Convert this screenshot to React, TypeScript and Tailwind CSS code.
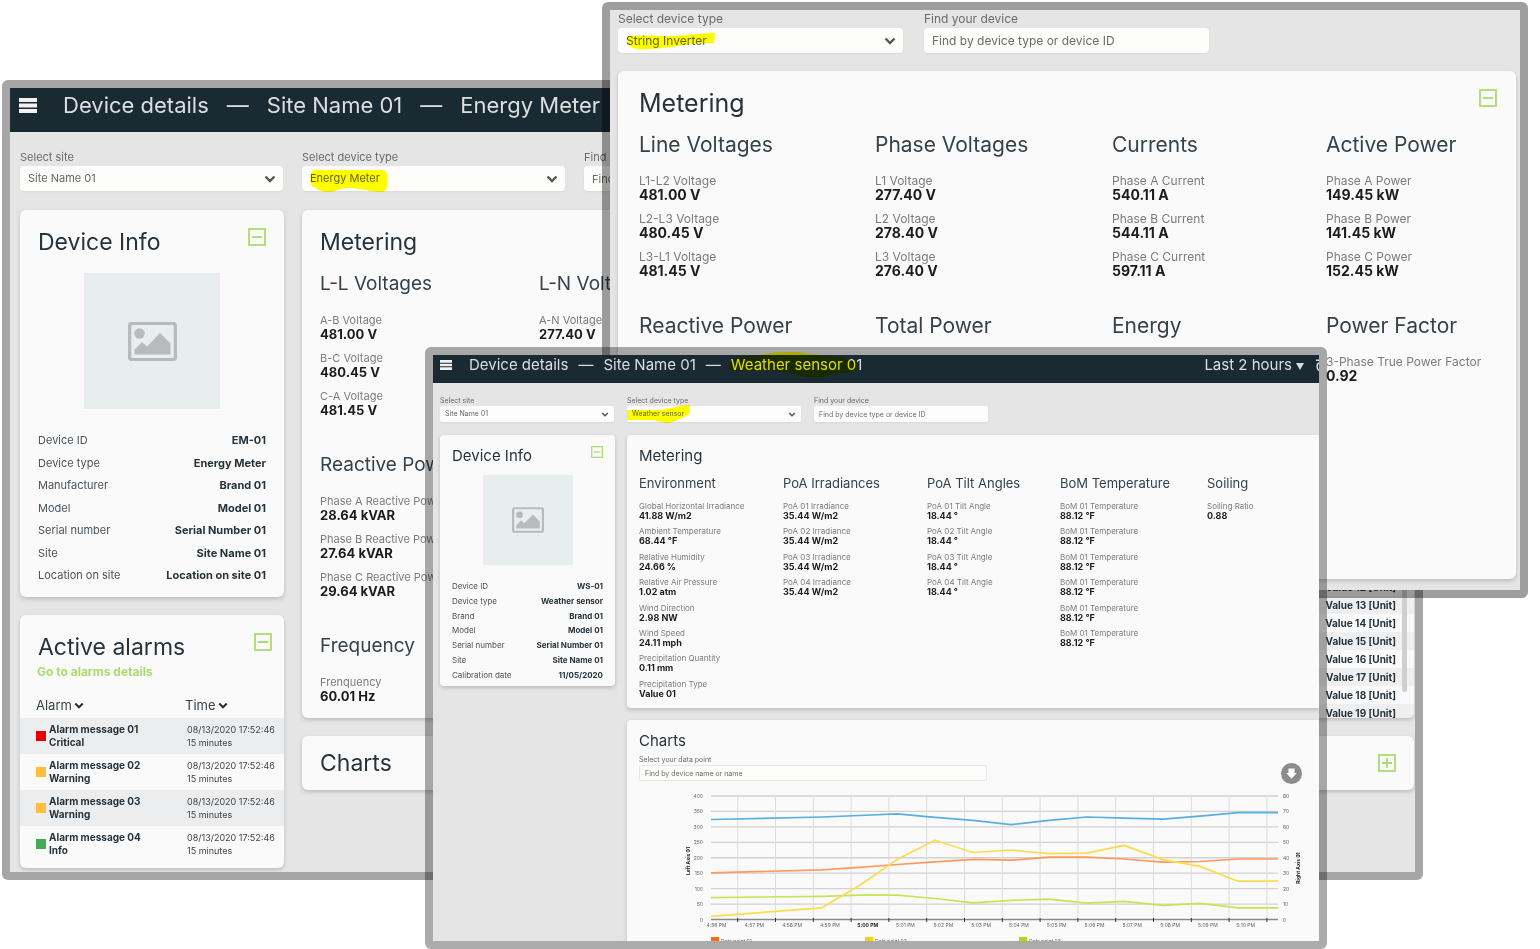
import { type ReactNode, useId } from 'react';
import clsx from 'clsx';

type Size = 'sm' | 'md' | 'lg';
type Reading = [label: string, value: string];
type Group = { title: string; readings: Reading[] };

const TITLE: Record<Size, string> = {
  sm: 'text-[15px] leading-5',
  md: 'text-[23px] leading-7',
  lg: 'text-[25px] leading-7',
};

const GROUP_TITLE: Record<Size, string> = {
  sm: 'text-[13px] leading-4',
  md: 'text-[19px] leading-6',
  lg: 'text-[21px] leading-6',
};

const FIELD_LABEL: Record<Size, string> = {
  sm: 'text-[7px] leading-[9px]',
  md: 'text-[11px] leading-[14px]',
  lg: 'text-[12px] leading-[14px]',
};

const LABEL: Record<Size, string> = {
  sm: 'text-[8px] leading-[9px]',
  md: 'text-[11px] leading-[14px]',
  lg: 'text-[12px] leading-[14px]',
};

const VALUE: Record<Size, string> = {
  sm: 'text-[9px] leading-[10px]',
  md: 'text-[13px] leading-[14px]',
  lg: 'text-[14px] leading-[14px]',
};

const FIELD: Record<Size, string> = {
  sm: 'h-4 px-[5px] text-[7px] rounded-xs',
  md: 'h-[25px] px-2 text-[11px] rounded-sm',
  lg: 'h-[25px] px-2 text-[12px] rounded-sm',
};

function ToggleButton({ open = true, small = false, label }: { open?: boolean; small?: boolean; label: string }) {
  return (
    <button type="button" aria-label={label} className="block shrink-0 text-[#aadb6e]">
      <svg viewBox="0 0 18 18" className={small ? 'size-3' : 'size-[18px]'} fill="none" stroke="currentColor" strokeWidth="1.8">
        <rect x="1" y="1" width="16" height="16" />
        <path d={open ? 'M4 9h10' : 'M4 9h10M9 4v10'} />
      </svg>
    </button>
  );
}

function MenuButton({ small = false }: { small?: boolean }) {
  return (
    <button type="button" aria-label="Menu" className="block shrink-0 text-[#f2f2f2]">
      <svg viewBox="0 0 18 15" className={small ? 'h-[10px] w-3' : 'h-[15px] w-[18px]'} fill="currentColor">
        <path d="M0 0h18v4H0zM0 5.5h18v4H0zM0 11h18v4H0z" />
      </svg>
    </button>
  );
}

function PictureIcon({ className }: { className: string }) {
  return (
    <svg viewBox="0 0 49 39" className={className} fill="#b9babe" aria-hidden="true">
      <path
        fillRule="evenodd"
        d="M3.5 0h42A3.5 3.5 0 0 1 49 3.500v32a3.500 3.500 0 0 1-3.500 3.500h-42A3.500 3.500 0 0 1 0 35.500v-32A3.500 3.500 0 0 1 3.500 0zM4.500 3a1.200 1.200 0 0 0-1.200 1.200v30.600a1.200 1.200 0 0 0 1.200 1.200h40a1.200 1.200 0 0 0 1.200-1.200V4.200A1.200 1.200 0 0 0 44.500 3z"
      />
      <circle cx="11.500" cy="11.500" r="5.200" />
      <path d="M6.500 32.500v-5l7.500-7.500 5 4.500L32 11l10.500 10.500v11z" />
    </svg>
  );
}

function Marker({ d, viewBox, className }: { d: string; viewBox: string; className: string }) {
  return (
    <svg viewBox={viewBox} className={clsx('pointer-events-none absolute mix-blend-multiply', className)} fill="#ffff00" aria-hidden="true">
      <path d={d} />
    </svg>
  );
}

type FieldProps = { label: string; size: Size; className?: string };

function SelectField({ label, size, className, value, marker }: FieldProps & { value: string; marker?: ReactNode }) {
  const id = useId();
  return (
    <div className={className}>
      <label htmlFor={id} className={clsx('block text-[#6b6b6b]', FIELD_LABEL[size])}>{label}</label>
      <div className={clsx('relative', size === 'sm' ? 'mt-px' : 'mt-0.5')}>
        <select id={id} className={clsx('block w-full appearance-none bg-[#fdfdfb] text-[#666] shadow-xs', FIELD[size])}>
          <option>{value}</option>
        </select>
        <svg
          viewBox="0 0 12 8"
          className={clsx('pointer-events-none absolute', size === 'sm' ? 'top-[6px] right-[5px] h-[5px] w-2' : 'top-[9px] right-[7px] h-2 w-3')}
          fill="none"
          stroke="#555"
          strokeWidth="2.4"
          aria-hidden="true"
        >
          <path d="M1.500 1.500 6 6l4.500-4.500" />
        </svg>
        {marker}
      </div>
    </div>
  );
}

function TextField({ label, size, className, placeholder, bordered }: FieldProps & { placeholder: string; bordered?: boolean }) {
  const id = useId();
  return (
    <div className={className}>
      <label htmlFor={id} className={clsx('block text-[#6b6b6b]', FIELD_LABEL[size])}>{label}</label>
      <input
        id={id}
        placeholder={placeholder}
        className={clsx(
          'block w-full bg-[#fdfdfb] text-[#555] placeholder:text-[#6b6b6b]',
          FIELD[size],
          size === 'sm' ? 'mt-px' : 'mt-0.5',
          bordered ? 'border border-[#e6e6e6]' : 'shadow-xs',
        )}
      />
    </div>
  );
}

function Card({ className, children }: { className?: string; children: ReactNode }) {
  return <section className={clsx('bg-[#fafafa] shadow-[0_2px_4px_rgba(0,0,0,0.18)]', className)}>{children}</section>;
}

function ReadingItem({ reading: [label, value], size }: { reading: Reading; size: Size }) {
  return (
    <div className="whitespace-nowrap">
      <dt className={clsx('text-[#7c7c7c]', LABEL[size])}>{label}</dt>
      <dd className={clsx('font-bold text-[#1c1c1c]', VALUE[size])}>{value}</dd>
    </div>
  );
}

function ReadingGroup({ group, size }: { group: Group; size: Size }) {
  return (
    <div>
      <h3 className={clsx('whitespace-nowrap text-[#36424a]', GROUP_TITLE[size])}>{group.title}</h3>
      <dl className={size === 'sm' ? 'mt-[11px] grid h-[203px] grid-rows-8' : 'mt-[17px] grid gap-2.5'}>
        {group.readings.map((reading, i) => (
          <ReadingItem key={i} reading={reading} size={size} />
        ))}
      </dl>
    </div>
  );
}

function DeviceInfo({ rows, small = false }: { rows: Reading[]; small?: boolean }) {
  return (
    <Card className={small ? 'rounded-sm px-3 pt-[11px] pb-[6px]' : 'rounded-md px-[18px] pt-[18px] pb-[14px]'}>
      <div className="flex items-start justify-between">
        <h2 className={clsx('text-[#26333c]', TITLE[small ? 'sm' : 'md'])}>Device Info</h2>
        <ToggleButton small={small} label="Collapse device info" />
      </div>
      <div
        className={clsx(
          'mx-auto flex items-center justify-center bg-[#e8eeee]',
          small ? 'mt-[9px] size-[90px]' : 'mt-[17px] size-[136px]',
        )}
      >
        <PictureIcon className={small ? 'h-[26px] w-8' : 'h-[39px] w-[49px]'} />
      </div>
      <dl className={clsx('flex flex-col justify-between', small ? 'mt-4 h-[99px] text-[8px] leading-[10px]' : 'mt-[23px] h-[151px] text-[11px] leading-4')}>
        {rows.map(([label, value]) => (
          <div key={label} className="flex justify-between whitespace-nowrap text-[#27333b]">
            <dt className="text-[#4a545b]">{label}</dt>
            <dd className="font-bold">{value}</dd>
          </div>
        ))}
      </dl>
    </Card>
  );
}

const volts = (names: string[], values: string[]): Reading[] => names.map((n, i) => [n, values[i]]);

const METER_INFO: Reading[] = [
  ['Device ID', 'EM-01'],
  ['Device type', 'Energy Meter'],
  ['Manufacturer', 'Brand 01'],
  ['Model', 'Model 01'],
  ['Serial number', 'Serial Number 01'],
  ['Site', 'Site Name 01'],
  ['Location on site', 'Location on site 01'],
];

const METER_GROUPS: Group[] = [
  { title: 'L-L Voltages', readings: volts(['A-B Voltage', 'B-C Voltage', 'C-A Voltage'], ['481.00 V', '480.45 V', '481.45 V']) },
  { title: 'L-N Voltages', readings: volts(['A-N Voltage'], ['277.40 V']) },
  {
    title: 'Reactive Power',
    readings: [
      ['Phase A Reactive Power', '28.64 kVAR'],
      ['Phase B Reactive Power', '27.64 kVAR'],
      ['Phase C Reactive Power', '29.64 kVAR'],
    ],
  },
  { title: '', readings: [] },
  { title: 'Frequency', readings: [['Frenquency', '60.01 Hz']] },
];

const ALARMS = [
  { message: 'Alarm message 01', level: 'Critical', color: 'bg-[#e60000]' },
  { message: 'Alarm message 02', level: 'Warning', color: 'bg-[#ffbe3d]' },
  { message: 'Alarm message 03', level: 'Warning', color: 'bg-[#ffbe3d]' },
  { message: 'Alarm message 04', level: 'Info', color: 'bg-[#43ac54]' },
];

const LIST_VALUES = [12, 13, 14, 15, 16, 17, 18, 19];

const INVERTER_GROUPS: Group[] = [
  { title: 'Line Voltages', readings: volts(['L1-L2 Voltage', 'L2-L3 Voltage', 'L3-L1 Voltage'], ['481.00 V', '480.45 V', '481.45 V']) },
  { title: 'Phase Voltages', readings: volts(['L1 Voltage', 'L2 Voltage', 'L3 Voltage'], ['277.40 V', '278.40 V', '276.40 V']) },
  { title: 'Currents', readings: volts(['Phase A Current', 'Phase B Current', 'Phase C Current'], ['540.11 A', '544.11 A', '597.11 A']) },
  { title: 'Active Power', readings: volts(['Phase A Power', 'Phase B Power', 'Phase C Power'], ['149.45 kW', '141.45 kW', '152.45 kW']) },
  { title: 'Reactive Power', readings: [] },
  { title: 'Total Power', readings: [] },
  { title: 'Energy', readings: [] },
  { title: 'Power Factor', readings: [['3-Phase True Power Factor', '0.92']] },
];

const SENSOR_INFO: Reading[] = [
  ['Device ID', 'WS-01'],
  ['Device type', 'Weather sensor'],
  ['Brand', 'Brand 01'],
  ['Model', 'Model 01'],
  ['Serial number', 'Serial Number 01'],
  ['Site', 'Site Name 01'],
  ['Calibration date', '11/05/2020'],
];

const SENSOR_GROUPS: Group[] = [
  {
    title: 'Environment',
    readings: [
      ['Global Horizontal Irradiance', '41.88 W/m2'],
      ['Ambient Temperature', '68.44 °F'],
      ['Relative Humidity', '24.66 %'],
      ['Relative Air Pressure', '1.02 atm'],
      ['Wind Direction', '2.98 NW'],
      ['Wind Speed', '24.11 mph'],
      ['Precipitation Quantity', '0.11 mm'],
      ['Precipitation Type', 'Value 01'],
    ],
  },
  { title: 'PoA Irradiances', readings: ['01', '02', '03', '04'].map((n): Reading => [`PoA ${n} Irradiance`, '35.44 W/m2']) },
  { title: 'PoA Tilt Angles', readings: ['01', '02', '03', '04'].map((n): Reading => [`PoA ${n} Tilt Angle`, '18.44 °']) },
  { title: 'BoM Temperature', readings: Array.from({ length: 6 }, (): Reading => ['BoM 01 Temperature', '88.12 °F']) },
  { title: 'Soiling', readings: [['Soiling Ratio', '0.88']] },
];

const CHART_X = [72, 183, 220, 258, 296, 334, 372, 410, 448, 485, 524, 561, 599, 639];
const CHART_SERIES = [
  { color: '#57b0e0', values: [324, 332, 337, 342, 331, 321, 307, 321, 332, 328, 325, 335, 346, 346] },
  { color: '#ff9a5c', values: [151, 161, 169, 178, 187, 195, 192, 202, 202, 196, 186, 188, 196, 196] },
  { color: '#c3e656', values: [71, 75, 79, 79, 68, 54, 62, 66, 53, 59, 46, 52, 38, 38] },
  { color: '#fbdc4c', values: [10, 38, 109, 194, 257, 217, 225, 213, 215, 240, 194, 172, 124, 124] },
];
const CHART_TIMES = [
  '4:56 PM', '4:57 PM', '4:58 PM', '4:59 PM', '5:00 PM', '5:01 PM', '5:02 PM', '5:03 PM',
  '5:04 PM', '5:05 PM', '5:06 PM', '5:07 PM', '5:08 PM', '5:09 PM', '5:10 PM',
];
const CHART_LEGEND = [
  { x: 72, color: '#ff6a13', name: 'Data point 01' },
  { x: 226, color: '#fccf00', name: 'Data point 02' },
  { x: 380, color: '#a9dc00', name: 'Data point 03' },
];

const chartY = (value: number) => 130.5 - (value / 400) * 123.5;

function Chart() {
  return (
    <svg viewBox="0 0 680 164" className="mt-2 block w-full" fontSize="5" role="img" aria-label="Data points over time">
      {Array.from({ length: 9 }, (_, i) => (
        <g key={i}>
          <path d={`M72 ${chartY(i * 50)}H639`} stroke={i === 0 ? '#8a8a8a' : '#d2d2d2'} strokeWidth="1.3" />
          <text x="64" y={chartY(i * 50) + 2} textAnchor="end" fill="#666">{i * 50}</text>
          <text x="644" y={chartY(i * 50) + 2} fill="#666">{i * 10}</text>
        </g>
      ))}
      {Array.from({ length: 15 }, (_, i) => (
        <g key={i}>
          <path d={`M${98.7 + i * 37.8} 7v123`} stroke="#dcdcdc" />
          <path d={`M${98.7 + i * 37.8} 129v4`} stroke="#333" />
        </g>
      ))}
      {CHART_TIMES.map((time, i) => (
        <text
          key={time}
          x={77.5 + i * 37.8}
          y="138"
          textAnchor="middle"
          fill={time === '5:00 PM' ? '#222' : '#666'}
          fontWeight={time === '5:00 PM' ? 700 : 400}
        >
          {time}
        </text>
      ))}
      <text transform="translate(51 72) rotate(-90)" textAnchor="middle" fontWeight="700" fill="#222">Left Axis 01</text>
      <text transform="translate(661 79) rotate(-90)" textAnchor="middle" fontWeight="700" fill="#222">Right Axis 01</text>
      {CHART_SERIES.map(({ color, values }) => (
        <polyline
          key={color}
          points={values.map((v, i) => `${CHART_X[i]},${chartY(v).toFixed(1)}`).join(' ')}
          fill="none"
          stroke={color}
          strokeWidth="1.7"
          strokeLinejoin="round"
        />
      ))}
      {CHART_LEGEND.map(({ x, color, name }) => (
        <g key={name}>
          <rect x={x} y="148" width="8" height="8" fill={color} />
          <text x={x + 10} y="154" fill="#666">{name}</text>
        </g>
      ))}
    </svg>
  );
}

function EnergyMeterWindow() {
  return (
    <article className="absolute top-20 right-[117px] left-0.5 isolate flex h-[800px] flex-col rounded-md border-8 border-black/35 bg-[#e5e5e5] bg-clip-padding">
      <header className="flex h-11 shrink-0 items-center bg-[#1a2a33] pb-2.5 pl-[9px] text-[22px] whitespace-nowrap text-[#dcdfe0]">
        <MenuButton />
        <h1 className="ml-[26px] flex gap-[18px]">
          <span>Device details</span>
          <span>—</span>
          <span>Site Name 01</span>
          <span>—</span>
          <span>Energy Meter</span>
        </h1>
      </header>
      <div className="flex min-h-0 flex-1 flex-col gap-[19px] overflow-hidden pt-[18px] pl-2.5">
        <div className="flex gap-[19px]">
          <SelectField size="md" label="Select site" value="Site Name 01" className="w-[263px]" />
          <SelectField
            size="md"
            label="Select device type"
            value="Energy Meter"
            className="w-[263px]"
            marker={
              <Marker
                viewBox="0 0 77 23"
                className="top-1 left-2 h-[23px] w-[77px]"
                d="M3 0 73 0Q77 1 77 4V16Q76 22 72 22C60 22 52 18 38 18 28 18 26 22 18 22 10 22 6 18 1 15Q-1 4 3 0Z"
              />
            }
          />
          <TextField size="md" label="Find your device" placeholder="Find by device type or device ID" className="w-[263px]" />
        </div>
        <div className="flex gap-[18px] pr-px">
          <div className="flex w-[264px] shrink-0 flex-col gap-[18px]">
            <DeviceInfo rows={METER_INFO} />
            <Card className="overflow-hidden rounded-md pt-[18px] pb-1.5">
              <div className="flex items-start justify-between pr-3 pl-[18px]">
                <h2 className={clsx('text-[#26333c]', TITLE.md)}>Active alarms</h2>
                <ToggleButton label="Collapse active alarms" />
              </div>
              <a href="#alarms" className="mt-[3px] ml-[17px] block text-[12px] leading-4 font-bold text-[#aadb6e]">Go to alarms details</a>
              <table className="mt-[13px] w-full table-fixed text-left text-[10px] leading-[13px] text-[#444]">
                <thead>
                  <tr className="h-[25px] text-[13px] text-[#36424a]">
                    {['Alarm', 'Time'].map((name) => (
                      <th key={name} className="pl-4 font-normal first:w-[149px] last:pl-4">
                        <button type="button" className="flex items-center gap-0.5">
                          {name}
                          <svg viewBox="0 0 12 8" className="h-[7px] w-2.5" fill="none" stroke="#333" strokeWidth="2.600" aria-hidden="true">
                            <path d="M1.500 1.500 6 6l4.500-4.500" />
                          </svg>
                        </button>
                      </th>
                    ))}
                  </tr>
                </thead>
                <tbody>
                  {ALARMS.map((alarm) => (
                    <tr key={alarm.message} className="h-9 odd:bg-[#ecedef]">
                      <td className="pl-4 font-bold text-[#26333c]">
                        <div className="flex items-center gap-[3px]">
                          <span className={clsx('size-2.5 shrink-0', alarm.color)} />
                          <span className="whitespace-nowrap">
                            {alarm.message}
                            <br />
                            {alarm.level}
                          </span>
                        </div>
                      </td>
                      <td className="pl-[18px] text-[9px] whitespace-nowrap">
                        08/13/2020 17:52:46
                        <br />
                        15 minutes
                      </td>
                    </tr>
                  ))}
                </tbody>
              </table>
            </Card>
          </div>
          <div className="flex min-w-0 flex-1 flex-col gap-[18px]">
            <div className="flex h-[508px] gap-[18px]">
              <Card className="min-w-0 flex-1 rounded-md px-[18px] pt-[18px]">
                <h2 className={clsx('text-[#26333c]', TITLE.md)}>Metering</h2>
                <div className="mt-4 grid grid-cols-[219px_219px] gap-y-9">
                  {METER_GROUPS.map((group, i) => (
                    <ReadingGroup key={i} group={group} size="md" />
                  ))}
                </div>
              </Card>
              <Card className="relative flex w-[264px] shrink-0 flex-col justify-end overflow-hidden rounded-md">
                <ul className="-mb-1 text-right text-[10px] leading-[18px] font-bold text-[#26333c]">
                  {LIST_VALUES.map((n) => (
                    <li key={n} className="pr-[18px] even:bg-[#efefef]">Value {n} [Unit]</li>
                  ))}
                </ul>
                <span className="absolute right-[7px] bottom-[26px] h-40 w-[5px] rounded-full bg-[#cfcfcf]" />
              </Card>
            </div>
            <Card className="flex h-[54px] items-center justify-between rounded-md px-[18px]">
              <h2 className={clsx('text-[#26333c]', TITLE.md)}>Charts</h2>
              <ToggleButton open={false} label="Expand charts" />
            </Card>
          </div>
        </div>
      </div>
    </article>
  );
}

function StringInverterWindow() {
  return (
    <article className="absolute top-0.5 right-3 left-[602px] isolate h-[596px] rounded-md border-8 border-black/38 bg-[#e5e5e5] bg-clip-padding pt-0.5 pr-1 pl-2">
      <div className="flex gap-[21px]">
        <SelectField
          size="lg"
          label="Select device type"
          value="String Inverter"
          className="w-[285px]"
          marker={
            <Marker
              viewBox="0 0 88 17"
              className="top-[5px] left-[9px] h-[17px] w-[88px]"
              d="M0 3C20 2 45 4 60 2Q75 0 88 0L87 10C70 10 55 12 45 14 30 15 15 18 6 15L0 11Z"
            />
          }
        />
        <TextField size="lg" label="Find your device" placeholder="Find by device type or device ID" className="w-[285px]" />
      </div>
      <Card className="mt-[18px] h-[508px] rounded-md pt-[18px] pr-[19px] pl-[21px]">
        <div className="flex items-start justify-between">
          <h2 className={clsx('text-[#26333c]', TITLE.lg)}>Metering</h2>
          <ToggleButton label="Collapse metering" />
        </div>
        <div className="mt-4 grid grid-cols-[236px_237px_214px_1fr] gap-y-9">
          {INVERTER_GROUPS.map((group) => (
            <ReadingGroup key={group.title} group={group} size="lg" />
          ))}
        </div>
      </Card>
    </article>
  );
}

function WeatherSensorWindow() {
  return (
    <article className="absolute top-[347px] right-[213px] left-[425px] isolate flex h-[602px] flex-col rounded-md border-8 border-black/33 bg-[#e5e5e5] bg-clip-padding">
      <header className="flex h-7 shrink-0 items-center justify-between bg-[#1a2a33] pb-2 text-[15px] whitespace-nowrap text-[#dcdfe0]">
        <div className="flex items-center pl-[7px]">
          <MenuButton small />
          <h1 className="ml-[17px] flex gap-[10px]">
            <span>Device details</span>
            <span>—</span>
            <span>Site Name 01</span>
            <span>—</span>
            <span className="relative">
              Weather sensor 01
              <Marker
                viewBox="0 0 130 26"
                className="-top-0.5 -left-1 h-[26px] w-[130px]"
                d="M4 8C14 6 20 3 33 3 45 0 65-1 78 1 88 3 95 3 110 5Q130 8 130 14 130 20 118 21 105 22 100 24 85 28 70 23 50 18 35 18 15 19 4 19Q-1 14 4 8Z"
              />
            </span>
          </h1>
        </div>
        <div className="flex items-center">
          <button type="button" className="flex items-center gap-1">
            Last 2 hours
            <svg viewBox="0 0 8 7" className="mt-0.5 h-[7px] w-2" fill="currentColor" aria-hidden="true">
              <path d="M0 0h8L4 7z" />
            </svg>
          </button>
          <svg viewBox="0 0 3 12" className="ml-3 h-3 w-[3px]" fill="none" stroke="currentColor" strokeWidth="1.500" aria-hidden="true">
            <path d="M0 1.200h3M3 4C.5 4.500.5 10.500 3 11.500" />
          </svg>
        </div>
      </header>
      <div className="flex min-h-0 flex-1 flex-col gap-[13px] overflow-hidden pt-[13px] pl-[7px]">
        <div className="flex gap-[13px]">
          <SelectField size="sm" label="Select site" value="Site Name 01" className="w-[174px]" />
          <SelectField
            size="sm"
            label="Select device type"
            value="Weather sensor"
            className="w-[174px]"
            marker={
              <Marker
                viewBox="0 0 63 18"
                className="-top-px left-0 h-[18px] w-[63px]"
                d="M0 5H28C42 5 50 0 63 0V8C58 12 50 16 41 18 34 18 30 15 24 15H0Z"
              />
            }
          />
          <TextField size="sm" label="Find your device" placeholder="Find by device type or device ID" className="w-[174px]" />
        </div>
        <div className="flex items-start gap-3">
          <div className="w-[175px] shrink-0">
            <DeviceInfo rows={SENSOR_INFO} small />
          </div>
          <div className="flex min-w-0 flex-1 flex-col gap-3">
            <Card className="h-[273px] rounded-l-sm pt-[11px] pl-3">
              <h2 className={clsx('text-[#26333c]', TITLE.sm)}>Metering</h2>
              <div className="mt-[9px] grid grid-cols-[144px_144px_133px_147px_1fr]">
                {SENSOR_GROUPS.map((group) => (
                  <ReadingGroup key={group.title} group={group} size="sm" />
                ))}
              </div>
            </Card>
            <Card className="rounded-l-sm pt-[11px] pl-3">
              <h2 className={clsx('text-[#26333c]', TITLE.sm)}>Charts</h2>
              <div className="mt-1 flex items-end justify-between pr-[17px]">
                <TextField size="sm" label="Select your data point" placeholder="Find by device name or name" className="w-[348px]" bordered />
                <button type="button" aria-label="Download" className="-mb-[3px]">
                  <svg viewBox="0 0 21 21" className="size-[21px]" aria-hidden="true">
                    <circle cx="10.500" cy="10.500" r="10.500" fill="#8c8c8c" />
                    <path d="M7.500 5.500h6v4.500h2.200l-5.200 5.700-5.200-5.700h2.200z" fill="#fff" />
                  </svg>
                </button>
              </div>
              <Chart />
            </Card>
          </div>
        </div>
      </div>
    </article>
  );
}

export default function App() {
  return (
    <main className="relative min-h-screen overflow-hidden bg-white font-['Inter','Liberation_Sans',sans-serif]">
      <EnergyMeterWindow />
      <StringInverterWindow />
      <WeatherSensorWindow />
    </main>
  );
}
